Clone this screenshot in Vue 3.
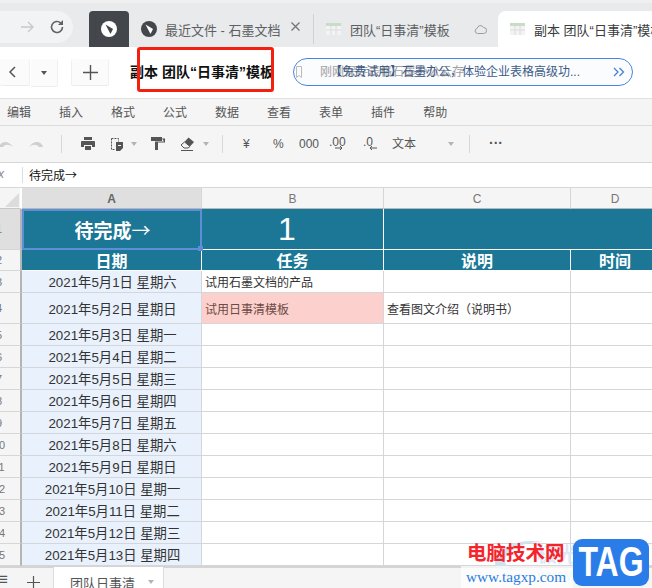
<script setup>
const menus = ['编辑', '插入', '格式', '公式', '数据', '查看', '表单', '插件', '帮助']
const days = [
  ['5', '2021年5月3日 星期一'], ['6', '2021年5月4日 星期二'], ['7', '2021年5月5日 星期三'],
  ['8', '2021年5月6日 星期四'], ['9', '2021年5月7日 星期五'], ['10', '2021年5月8日 星期六'],
  ['11', '2021年5月9日 星期日'], ['12', '2021年5月10日 星期一'], ['13', '2021年5月11日 星期二'],
  ['14', '2021年5月12日 星期三'], ['15', '2021年5月13日 星期四']
]
</script>

<template>
  <div class="page">
    <div class="chrome">
      <div class="addr">
        <svg width="14" height="14" viewBox="0 0 14 14" class="fwd"><path d="M1 7h12M8 2l5 5-5 5" fill="none" stroke="#c8c9cb" stroke-width="1.4"/></svg>
        <svg width="16" height="16" viewBox="0 0 16 16" class="reload"><path d="M13.5 8a5.5 5.5 0 1 1-1.7-4" fill="none" stroke="#5f6368" stroke-width="1.6"/><path d="M14 1v5h-5z" fill="#5f6368"/></svg>
      </div>
      <div class="tab-dark">
        <svg width="16" height="16" viewBox="0 0 16 16"><circle cx="8" cy="8" r="8" fill="#fff"/><path d="M4.500 3.500L12 8l-2.500 5z" fill="#43474b"/></svg>
      </div>
      <div class="tab t1">
        <svg width="16" height="16" viewBox="0 0 16 16"><circle cx="8" cy="8" r="8" fill="#43474b"/><path d="M4.500 3.500L12 8l-2.500 5z" fill="#fff"/></svg>
        <span class="tab-text">最近文件 - 石墨文档</span>
        <svg class="close" width="9" height="9" viewBox="0 0 9 9"><path d="M.5.500l8 8M8.500.500l-8 8" stroke="#6f7275" stroke-width="1.200"/></svg>
      </div>
      <div class="tab t2">
        <svg class="sheet" width="15" height="12" viewBox="0 0 15 12"><rect width="15" height="12" fill="#f2f3f2"/><rect width="15" height="3" fill="#c8dcc8"/><path d="M5 3v9M10 3v9M0 7h15" stroke="#dcdcdc"/></svg>
        <span class="tab-text">团队“日事清”模板</span>
        <svg class="cloud" width="13" height="10" viewBox="0 0 13 10"><path d="M3.500 9.500a2.600 2.600 0 0 1-.4-5.100A3.400 3.400 0 0 1 9.500 3.500a3 3 0 0 1 .2 6z" fill="none" stroke="#9a9c9e"/></svg>
      </div>
      <div class="tab-active">
        <svg class="sheet" width="15" height="12" viewBox="0 0 15 12"><rect width="15" height="12" fill="#f2f3f2"/><rect width="15" height="3" fill="#c8dcc8"/><path d="M5 3v9M10 3v9M0 7h15" stroke="#dcdcdc"/></svg>
        <span class="tab-text dark">副本 团队“日事清”模板</span>
      </div>
    </div>

    <div class="header">
      <div class="btn b-back"><svg width="8" height="12" viewBox="0 0 8 12"><path d="M7 1L2 6l5 5" fill="none" stroke="#555" stroke-width="1.500"/></svg></div>
      <div class="btn b-drop"><i class="caret dark-caret"></i></div>
      <div class="btn b-plus"><svg width="15" height="15" viewBox="0 0 15 15"><path d="M7.500 0v15M0 7.500h15" stroke="#555" stroke-width="1.400"/></svg></div>
      <div class="doc-title">副本 团队“日事清”模板</div>
      <div class="pill">
        <svg class="mark" width="6" height="12" viewBox="0 0 6 12"><path d="M.5.500h5v11L3 9.500.5 11.500z" fill="none" stroke="#bbb"/></svg>
        <span class="pill-gray">刚刚保存表格石墨办公云存</span>
        <span class="pill-main">【免费试用】石墨办公，体验企业表格高级功...</span>
        <svg class="chev" width="12" height="10" viewBox="0 0 12 10"><path d="M1 1l4 4-4 4M6.500 1l4 4-4 4" fill="none" stroke="#4a7fd0" stroke-width="1.300"/></svg>
      </div>
    </div>

    <div class="menu">
      <span v-for="m in menus" :key="m">{{ m }}</span>
    </div>

    <div class="toolbar">
      <svg class="undo" width="16" height="8" viewBox="0 0 16 8"><path d="M1 7c2-6 9-7 14 0-4-3-8-3-10 0z" fill="#cfcfcf"/></svg>
      <svg class="redo" width="16" height="8" viewBox="0 0 16 8"><path d="M15 7C13 1 6 0 1 7c4-3 8-3 10 0z" fill="#cfcfcf"/></svg>
      <i class="sep s1"></i>
      <svg class="ic print" width="14" height="13" viewBox="0 0 14 13"><path d="M3 0h8v3H3zM1 4h12a1 1 0 0 1 1 1v5h-3V8H3v2H0V5a1 1 0 0 1 1-1zM4 9h6v4H4z" fill="#555"/></svg>
      <svg class="ic paste" width="12" height="14" viewBox="0 0 12 14"><path d="M.5 1.500h7v3M.5 1.500v11h3" fill="none" stroke="#555" stroke-dasharray="2 1"/><path d="M5 5h7v6l-3 3H5z" fill="#555"/><path d="M7 8h3v1H7z" fill="#f5f5f5"/></svg>
      <i class="caret c1"></i>
      <svg class="ic paint" width="14" height="13" viewBox="0 0 14 13"><path d="M0 0h11v4H0zM11 1.500h3v4H7V13H4V4.500h9z" fill="#555"/></svg>
      <svg class="ic eraser" width="15" height="14" viewBox="0 0 15 14"><path d="M8.500.500L14 5l-4 4.500L4.500 5z" fill="#555"/><path d="M4.500 5l5.500 4.500L8 11H4L1 8z" fill="#f5f5f5" stroke="#555"/><path d="M1 13.500h12" stroke="#555"/></svg>
      <i class="caret c2"></i>
      <i class="sep s2"></i>
      <span class="tx yen">¥</span>
      <span class="tx pct">%</span>
      <span class="tx thou">000</span>
      <span class="tx dec1">.00<svg width="8" height="4" viewBox="0 0 8 4"><path d="M0 2h6M5 0l2 2-2 2" stroke="#555" fill="none"/></svg></span>
      <span class="tx dec2">.0<svg width="8" height="4" viewBox="0 0 8 4"><path d="M8 2H2M3 0L1 2l2 2" stroke="#555" fill="none"/></svg></span>
      <span class="tx wen">文本</span>
      <i class="caret c3"></i>
      <i class="sep s3"></i>
      <span class="dots">···</span>
    </div>

    <div class="formula">
      <span class="fx">x</span>
      <span class="ftext">待完成→</span>
    </div>

    <div class="sheet-grid">
      <div class="corner"><i></i></div>
      <div class="col sel">A</div>
      <div class="col">B</div>
      <div class="col">C</div>
      <div class="col">D</div>

      <div class="rh sel-r"><span>1</span></div>
      <div class="teal big a1"><span>待完成<span class="thin">→</span></span><i class="handle"></i></div>
      <div class="teal huge">1</div>
      <div class="teal span2"></div>

      <div class="rh"><span>2</span></div>
      <div class="teal head">日期</div>
      <div class="teal head">任务</div>
      <div class="teal head">说明</div>
      <div class="teal head">时间</div>

      <div class="rh"><span>3</span></div>
      <div class="date">2021年5月1日 星期六</div>
      <div class="cell">试用石墨文档的产品</div>
      <div class="cell"></div>
      <div class="cell"></div>

      <div class="rh"><span>4</span></div>
      <div class="date">2021年5月2日 星期日</div>
      <div class="cell pink">试用日事清模板</div>
      <div class="cell">查看图文介绍（说明书）</div>
      <div class="cell"></div>

      <template v-for="d in days" :key="d[0]">
        <div class="rh"><span>{{ d[0] }}</span></div>
        <div class="date">{{ d[1] }}</div>
        <div class="cell"></div>
        <div class="cell"></div>
        <div class="cell"></div>
      </template>
    </div>

    <div class="bottom">
      <span class="lines">≡</span>
      <svg class="bplus" width="13" height="13" viewBox="0 0 13 13"><path d="M6.500 0v13M0 6.500h13" stroke="#555" stroke-width="1.200"/></svg>
      <div class="sheet-tab"><span>团队日事清</span><i class="caret"></i></div>
    </div>

    <div class="redbox"></div>

    <div class="wm">
      <svg class="wm-swirl" width="56" height="34" viewBox="0 0 56 34"><path d="M4 24C6 8 30 0 52 4 34 4 16 10 14 22c-1 6 6 9 14 10C14 33 3 31 4 24z" fill="#cfe3ee"/></svg>
      <span class="wm-faint">极光下载站</span>
      <span class="wm-faint2">www.xz7.com</span>
      <span class="wm-url">www.tagxp.com</span>
      <span class="wm-red">电脑技术网</span>
      <span class="wm-tag"><b>TAG</b></span>
    </div>
  </div>
</template>

<style>
html, body { margin: 0; background: #fff; }
</style>

<style scoped>
.page {
  position: relative;
  width: 652px;
  height: 588px;
  overflow: hidden;
  display: flex;
  flex-direction: column;
  font-family: "Liberation Sans", "Noto Sans CJK SC", sans-serif;
  background: #fff;
}
.chrome {
  height: 41px;
  padding-top: 3px;
  background: #e9eaeb;
  border-top: 3px solid #f0f0f0;
  flex: none;
  position: relative;
}
.addr {
  position: absolute;
  left: 0; top: 8px;
  width: 73px; height: 32px;
  background: #f1f3f4;
  border-radius: 0 16px 16px 0;
}
.fwd { position: absolute; left: 20px; top: 9px; }
.reload { position: absolute; left: 49px; top: 8px; }
.tab-dark {
  position: absolute; left: 89px; top: 8px;
  width: 40px; height: 36px;
  background: #43474b;
  border-radius: 4px 4px 0 0;
  display: flex; align-items: center; justify-content: center;
}
.tab { position: absolute; top: 8px; height: 36px; display: flex; align-items: center; }
.t1 { left: 141px; width: 172px; border-right: 1px solid #d0d1d2; height: 30px; top: 11px; }
.t2 { left: 326px; width: 172px; }
.tab-text { font-size: 13px; color: #5c5f63; white-space: nowrap; }
.tab-text.dark { color: #3a3d40; }
.t1 .tab-text { margin-left: 8px; }
.close { position: absolute; left: 150px; top: 8px; }
.t2 .tab-text { margin-left: 9px; }
.cloud { margin-left: 24px; }
.tab-active {
  position: absolute; left: 498px; top: 8px;
  width: 154px; height: 36px;
  background: #fff;
  border-radius: 8px 0 0 0;
  display: flex; align-items: center;
  padding-left: 12px;
  box-sizing: border-box;
  overflow: hidden;
}
.sheet { flex: none; }
.tab-active .tab-text { margin-left: 9px; }

.header {
  position: relative;
  height: 51px;
  background: #fff;
  border-bottom: 1px solid #e0e0e0;
  flex: none;
}
.btn {
  position: absolute; top: 12px; height: 27px;
  background: #fbfbfb;
  border-bottom: 1px solid #ececec;
  border-right: 1px solid #f0f0f0;
  display: flex; align-items: center; justify-content: center;
  border-radius: 2px;
}
.b-back { left: 0; width: 30px; padding-left: 8px; box-sizing: border-box; justify-content: flex-start; }
.b-drop { left: 31px; width: 26px; }
.b-plus { left: 71px; width: 38px; border-left: 1px solid #f0f0f0; box-sizing: border-box; }
.doc-title {
  position: absolute; left: 130px; top: 16px;
  font-size: 14px; font-weight: 700; color: #111; white-space: nowrap; line-height: 18px;
}
.pill {
  position: absolute; left: 293px; top: 11px;
  width: 340px; height: 28px;
  box-sizing: border-box;
  border: 1px solid #4a86d8;
  border-radius: 14px;
  background: #fbfcfe;
}
.mark { position: absolute; left: 2px; top: 7px; }
.pill-gray { position: absolute; left: 26px; top: 5px; font-size: 12px; line-height: 16px; color: #a0a0a0; white-space: nowrap; }
.pill-main { position: absolute; left: 36px; top: 5px; font-size: 12px; line-height: 16px; color: #3c5a86; white-space: nowrap; }
.chev { position: absolute; right: 7px; top: 8px; }

.menu {
  flex: none;
  background: #f5f5f5;
  border-bottom: 1px solid #dcdcdc;
  display: flex;
  align-items: center;
  gap: 28px;
  padding: 0 0 1px 7px;
  height: 25px;
  font-size: 12px;
  color: #555;
}
.toolbar {
  position: relative;
  height: 36px;
  flex: none;
  background: #f5f5f5;
  border-bottom: 1px solid #d6d6d6;
}
.toolbar > * { position: absolute; }
.undo { left: -2px; top: 14px; }
.redo { left: 28px; top: 14px; }
.sep { top: 9px; width: 1px; height: 18px; background: #d8d8d8; }
.s1 { left: 61px; }
.s2 { left: 222px; }
.s3 { left: 469px; }
.print { left: 81px; top: 11px; }
.paste { left: 111px; top: 11px; }
.paint { left: 151px; top: 11px; }
.eraser { left: 180px; top: 11px; }
.caret {
  display: inline-block;
  width: 0; height: 0;
  border-left: 3px solid transparent;
  border-right: 3px solid transparent;
  border-top: 4px solid #b4b4b4;
}
.dark-caret { border-top-color: #555; }
.c1 { left: 131px; top: 16px; }
.c2 { left: 203px; top: 16px; }
.c3 { left: 448px; top: 16px; }
.tx { font-size: 12px; color: #555; top: 10px; line-height: 16px; white-space: nowrap; }
.tx svg { position: absolute; left: 6px; bottom: 0; }
.yen { left: 243px; }
.pct { left: 273px; }
.thou { left: 299px; }
.dec1 { left: 329px; top: 8px; }
.dec2 { left: 363px; top: 8px; }
.wen { left: 392px; }
.dots { left: 489px; top: 8px; font-size: 14px; font-weight: 700; color: #555; line-height: 18px; }

.formula {
  position: relative;
  height: 24px;
  flex: none;
  background: #fff;
  border-bottom: 1px solid #d6d6d6;
}
.fx { position: absolute; left: -2px; top: 4px; font-size: 12px; color: #888; font-style: italic; }
.formula::before { content: ""; position: absolute; left: 22px; top: 4px; width: 1px; height: 16px; background: #ddd; }
.ftext { position: absolute; left: 29px; top: 3px; font-size: 12px; line-height: 18px; color: #111; font-family: "Noto Sans CJK SC", sans-serif; }

.sheet-grid {
  flex: none;
  display: grid;
  grid-template-columns: 22px 180px 182px 187px 89px;
  grid-template-rows: 21px 41px 21px 22px 31px repeat(11, 22px);
  background: #fff;
}
.corner {
  background: #f5f5f5;
  border-right: 2px solid #fff;
  border-bottom: 1px solid #c8c8c8;
  position: relative;
  box-sizing: border-box;
}
.corner i {
  position: absolute; right: 1px; bottom: 1px; width: 0; height: 0;
  border-left: 14px solid transparent;
  border-bottom: 14px solid #dcdcdc;
}
.col {
  background: #f5f5f5;
  border-right: 1px solid #d4d6d9;
  border-bottom: 1px solid #b8b8b8;
  box-sizing: border-box;
  display: flex; align-items: center; justify-content: center;
  padding-top: 1px;
  font-size: 12px; color: #777;
}
.col.sel { background: #dfdfdf; color: #666; font-weight: 700; }
.rh {
  background: #f5f5f5;
  border-right: 2px solid #b5b5b5;
  border-bottom: 1px solid #d6d6d6;
  box-sizing: border-box;
  overflow: hidden;
  font-size: 11px;
  color: #777;
  display: flex;
  align-items: center;
}
.rh span { display: block; width: 14px; margin-left: -8px; text-align: center; flex: none; }
.sel-r { background: #dfdfdf; }
.teal {
  background: #1b7795;
  color: #fff;
  border-right: 1px solid #fff;
  border-bottom: 1px solid #fff;
  box-sizing: border-box;
  display: flex; align-items: center; justify-content: center;
  font-weight: 700;
}
.big { font-size: 19px; font-family: "Noto Sans CJK SC", sans-serif; padding-left: 2px; }
.thin { font-weight: 400; }
.huge { font-size: 32px; font-weight: 400; padding-right: 11px; }
.head { font-size: 16px; }
.span2 { grid-column: span 2; border-right: 0; }
.a1 {
  position: relative;
  outline: 2px solid #5b8fd6;
  outline-offset: -2px;
  z-index: 2;
}
.handle {
  position: absolute; right: -2px; bottom: -2px;
  width: 5px; height: 5px;
  background: #5b8fd6;
}
.date {
  background: #e8f1fc;
  border-right: 1px solid #d4d6d9;
  border-bottom: 1px solid #d4d6d9;
  box-sizing: border-box;
  display: flex; align-items: center; justify-content: center;
  padding-left: 2px;
  font-size: 13.330px; color: #333; white-space: nowrap;
}
.cell {
  background: #fff;
  border-right: 1px solid #d4d6d9;
  border-bottom: 1px solid #d4d6d9;
  box-sizing: border-box;
  display: flex; align-items: center;
  padding-left: 3px;
  font-size: 12px; color: #333; white-space: nowrap;
}
.pink { background: #fcd0cc; color: #6d4a46; }

.bottom {
  position: relative;
  flex: 1;
  background: #f5f5f5;
  border-top: 2px solid #d4d4d4;
  min-height: 0;
}
.lines { position: absolute; left: -2px; top: 2px; font-size: 17px; color: #555; }
.bplus { position: absolute; left: 27px; top: 8px; }
.sheet-tab {
  position: absolute; left: 53px; top: -1px;
  width: 111px; height: 30px;
  background: #fff;
  border-right: 1px solid #ddd;
  border-left: 1px solid #ddd;
  box-sizing: border-box;
  font-size: 13px; color: #555;
}
.sheet-tab span { position: absolute; left: 16px; top: 7px; line-height: 20px; white-space: nowrap; }
.sheet-tab .caret { position: absolute; left: 94px; top: 13px; }

.redbox {
  position: absolute; left: 137px; top: 47px;
  width: 137px; height: 45px;
  box-sizing: border-box;
  border: 3px solid #f4200f;
  border-radius: 3px;
}
.wm { position: absolute; left: 461px; top: 538px; width: 191px; height: 50px; }
.wm-swirl { position: absolute; left: 30px; top: 0; }
.wm-faint { position: absolute; left: 76px; top: 1px; font-size: 20px; font-weight: 700; color: #dbe8f5; white-space: nowrap; }
.wm-faint2 { position: absolute; left: 76px; top: 28px; font-size: 15px; font-weight: 700; color: #dcebdc; white-space: nowrap; }
.wm-url {
  position: absolute; left: 0; top: 28px;
  padding: 0 5px; width: 102px; height: 22px;
  background: rgba(255,255,255,.7);
  font-family: "Liberation Serif", serif;
  font-size: 15.300px; line-height: 22px; color: #2b7ce0; white-space: nowrap;
}
.wm-red { position: absolute; left: 6px; top: 3px; font-size: 19.500px; line-height: 24px; font-weight: 700; color: #f5232c; white-space: nowrap; }
.wm-tag {
  position: absolute; left: 112px; top: 1px;
  width: 76px; height: 47px;
  background: #2a7de9;
  border-radius: 9px;
  color: #fff;
  font-size: 32px; line-height: 47px;
  text-align: center;
}
.wm-tag b { display: inline-block; transform: scaleY(1.3); }
</style>
